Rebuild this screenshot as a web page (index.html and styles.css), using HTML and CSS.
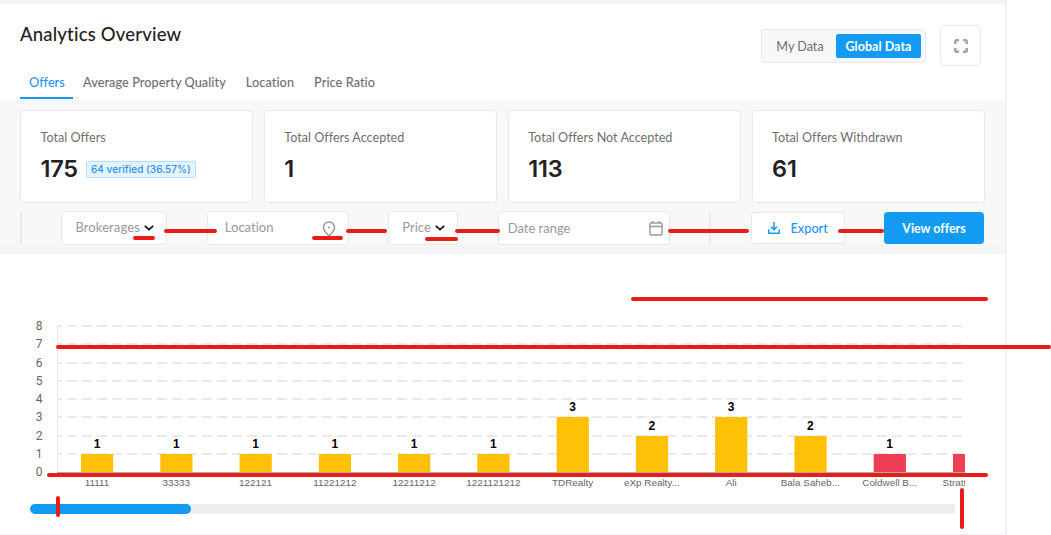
FILE: index.html
```
<!DOCTYPE html>
<html lang="en">

<head>
    <meta charset="UTF-8">
    <meta name="viewport" content="width=device-width, initial-scale=1.0">
    <title>Analytics Overview</title>
    <link rel="stylesheet" href="styles.css">
</head>

<body>
    <div class="panel">
        <div class="header">
            <h1>Analytics Overview</h1>
            <div class="header-actions">
                <div class="toggle">
                    <button class="toggle-btn">My Data</button>
                    <button class="toggle-btn active">Global Data</button>
                </div>
                <button class="fullscreen-btn">
                    <svg width="14" height="14" viewBox="0 0 14 14" fill="none" stroke="#a6a6a6" stroke-width="2.6">
                        <path d="M1.3 5V2.300a1 1 0 0 1 1-1H5M9 1.3h2.700a1 1 0 0 1 1 1V5M12.7 9v2.700a1 1 0 0 1-1 1H9M5 12.7H2.300a1 1 0 0 1-1-1V9" />
                    </svg>
                </button>
            </div>
        </div>

        <div class="tabs">
            <a class="tab active">Offers</a>
            <a class="tab">Average Property Quality</a>
            <a class="tab">Location</a>
            <a class="tab">Price Ratio</a>
        </div>

        <div class="summary">
            <div class="cards">
                <div class="card">
                    <p class="card-title">Total Offers</p>
                    <div class="card-value">175 <span class="badge">64 verified (36.57%)</span></div>
                </div>
                <div class="card">
                    <p class="card-title">Total Offers Accepted</p>
                    <div class="card-value">1</div>
                </div>
                <div class="card">
                    <p class="card-title">Total Offers Not Accepted</p>
                    <div class="card-value">113</div>
                </div>
                <div class="card">
                    <p class="card-title">Total Offers Withdrawn</p>
                    <div class="card-value">61</div>
                </div>
            </div>

            <div class="filters">
                <span class="divider"></span>
                <div class="filter brokerages">
                    <span>Brokerages</span>
                    <svg width="10" height="6" viewBox="0 0 10 6" fill="none" stroke="#111" stroke-width="1.7">
                        <path d="M.8.8 5 4.7 9.2.8" />
                    </svg>
                </div>
                <div class="filter location">
                    <span>Location</span>
                    <svg width="14" height="16" viewBox="0 0 14 16" fill="none" stroke="#999" stroke-width="1.5">
                        <path d="M7 14.8C4.500 12.300 1.500 9.800 1.500 6.400a5.500 5.500 0 0 1 11 0c0 3.400-3 5.900-5.500 8.400z" />
                        <circle cx="7" cy="6.500" r="1" fill="#999" stroke="none" />
                    </svg>
                </div>
                <div class="filter price">
                    <span>Price</span>
                    <svg width="10" height="6" viewBox="0 0 10 6" fill="none" stroke="#111" stroke-width="1.7">
                        <path d="M.8.8 5 4.7 9.2.8" />
                    </svg>
                </div>
                <div class="filter date">
                    <span>Date range</span>
                    <svg width="14" height="15" viewBox="0 0 14 15" fill="none" stroke="#999" stroke-width="1.4">
                        <rect x="1" y="2" width="12" height="12" rx="1" />
                        <path d="M1 5.500h12M3.500 0v2M10.500 0v2" />
                    </svg>
                </div>
                <span class="divider"></span>
                <button class="export-btn">
                    <svg width="12" height="12" viewBox="0 0 12 12" fill="none" stroke="#139bf3" stroke-width="1.5">
                        <path d="M6 0v7.500M3 4.800l3 3 3-3M.8 7.500v3.700h10.400V7.500" />
                    </svg>
                    <span>Export</span>
                </button>
                <button class="view-btn">View offers</button>
            </div>
        </div>

        <div class="chart-area">
            <svg id="chart" width="1005" height="242" viewBox="0 254 1005 242">
                <defs>
                    <clipPath id="plot">
                        <rect x="56" y="254" width="909" height="242" />
                    </clipPath>
                </defs>
                <g id="grid"></g>
                <path class="y-axis" d="M57.500 325v148" />
                <path class="x-axis" d="M57 472.500h908" />
                <g id="bars" clip-path="url(#plot)"></g>
            </svg>
            <div class="scrollbar">
                <div class="scrollbar-thumb"></div>
            </div>
        </div>
    </div>

    <!-- Markup strokes drawn over the panel -->
    <svg class="marks" width="1051" height="535" viewBox="0 0 1051 535">
        <path d="M135 238h18M166 231h49M314 238h27M348 231h37M427 239h29M457 231h41M670 231h77M840 231h42" />
        <path d="M633 299h353M58 347h991M49 475h937M58 498v17M962 490v37" />
    </svg>

    <script>
        const brokers = [
            { name: '11111', offers: 1 },
            { name: '33333', offers: 1 },
            { name: '122121', offers: 1 },
            { name: '11221212', offers: 1 },
            { name: '12211212', offers: 1 },
            { name: '1221121212', offers: 1 },
            { name: 'TDRealty', offers: 3 },
            { name: 'eXp Realty...', offers: 2 },
            { name: 'Ali', offers: 3 },
            { name: 'Bala Saheb...', offers: 2 },
            { name: 'Coldwell B...', offers: 1, color: '#ed3e55' },
            { name: 'Stratton R...', offers: 1, color: '#ed3e55' }
        ];

        // Y position of every tick, from 0 to 8
        const ticks = [472, 454, 436, 417, 399, 381, 363, 344, 326];
        const step = 79.27;
        let grid = '';
        let bars = '';

        ticks.forEach((y, value) => {
            grid += `<text class="tick" x="39" y="${y + 4}">${value}</text>`;
            if (value > 0) {
                grid += `<path class="grid-line" d="M57 ${y}h905" />`;
            }
        });

        brokers.forEach((broker, i) => {
            const x = 81 + i * step;
            const y = ticks[broker.offers];
            bars += `<rect x="${x}" y="${y}" width="32.2" height="${472 - y}" fill="${broker.color || '#ffc107'}" />`;
            bars += `<text class="bar-value" x="${x + 16}" y="${y - 6}">${broker.offers}</text>`;
            bars += `<text class="bar-name" x="${x + 16}" y="486">${broker.name}</text>`;
        });

        document.getElementById('grid').innerHTML = grid;
        document.getElementById('bars').innerHTML = bars;
    </script>
</body>

</html>
```
FILE: styles.css
```
* {
    margin: 0;
    padding: 0;
    box-sizing: border-box;
}

body {
    width: 1051px;
    height: 535px;
    overflow: hidden;
    background-color: #fff;
    font-family: Lato, sans-serif;
    font-size: 13px;
    font-variant-ligatures: none;
    color: #6f6f6f;
}

button {
    font: inherit;
    font-variant-ligatures: none;
    color: inherit;
    border: none;
    background: none;
}

.panel {
    width: 1007px;
    height: 535px;
    border-top: 4px solid #f2f3f8;
    border-right: 2px solid #f0f0f8;
    border-bottom: 1px solid #f2f3f8;
}

.header {
    display: flex;
    justify-content: space-between;
    height: 66px;
    padding: 0 24px 0 20px;
}

h1 {
    margin-top: 18px;
    font-size: 18.5px;
    font-weight: 500;
    line-height: 25px;
    letter-spacing: 0.18px;
    color: #212121;
}

.header-actions {
    display: flex;
    gap: 14px;
    padding-top: 21px;
}

.toggle {
    display: flex;
    width: 165px;
    height: 34px;
    margin-top: 4px;
    padding: 4px;
    background-color: #f8f8f8;
    border: 1px solid #e9e9e9;
    border-radius: 4px;
    font-size: 12.6px;
}

.toggle-btn {
    width: 70px;
    height: 24px;
    padding-right: 2px;
    line-height: 23px;
}

.toggle-btn.active {
    width: 85px;
    padding-right: 0;
    background-color: #139bf3;
    border-radius: 2px;
    color: #fff;
    font-weight: 700;
}

.fullscreen-btn {
    display: flex;
    align-items: center;
    justify-content: center;
    width: 41px;
    height: 41px;
    border: 1px solid #e9e9e9;
    border-radius: 5px;
}

.tabs {
    display: flex;
    height: 30px;
    padding-left: 20px;
}

.tab {
    height: 29px;
    padding: 2px 10px 0;
    font-size: 12.7px;
    line-height: 20px;
    font-weight: 500;
    letter-spacing: 0.07px;
    white-space: nowrap;
}

.tab.active {
    width: 53px;
    padding: 2px 9px 0;
    letter-spacing: 0;
    color: #2a93ee;
    border-bottom: 2px solid #139bf3;
}

.summary {
    height: 154px;
    padding: 10px 21px 0 20px;
    background: linear-gradient(#f8f8f8 140px, #f4f4f4);
}

.cards {
    display: grid;
    grid-template-columns: repeat(4, 233.4px);
    justify-content: space-between;
    margin-right: -1px;
}

.card {
    height: 93px;
    padding: 17px 19.5px;
    background-color: #fff;
    border: 1px solid #e9e9e9;
    border-radius: 4px;
}

.card-title {
    font-size: 12.6px;
    line-height: 20px;
}

.card-value {
    display: flex;
    align-items: center;
    gap: 8px;
    margin-top: 6px;
    font-family: Inter, sans-serif;
    font-size: 23.5px;
    font-weight: 600;
    line-height: 30px;
    letter-spacing: -0.2px;
    color: #212121;
}

.badge {
    height: 17px;
    padding: 0 4px;
    background-color: #e6f4ff;
    border: 1px solid #b4defa;
    border-radius: 2px;
    font-size: 10px;
    font-weight: 500;
    line-height: 15px;
    letter-spacing: 0.05px;
    color: #2a93ee;
}

.filters {
    display: flex;
    align-items: center;
    justify-content: space-between;
    margin-top: 8px;
    height: 34px;
}

.divider {
    width: 2px;
    height: 32px;
    background-color: #e9e9e9;
}

.filter {
    display: flex;
    align-items: center;
    height: 34px;
    background-color: #fff;
    border: 1px solid #e9e9e9;
    border-radius: 4px;
    color: #999;
}

.filter span {
    padding-bottom: 2px;
}

.brokerages {
    width: 106px;
    padding-left: 13px;
    gap: 4px;
    letter-spacing: 0.1px;
}

.price {
    width: 70px;
    padding-left: 13px;
    gap: 4px;
}

.location {
    justify-content: space-between;
    width: 142px;
    padding: 0 12px 0 17px;
}

.location svg {
    margin-top: 2px;
}

.date {
    justify-content: space-between;
    width: 172px;
    padding: 0 6px 0 9px;
}

.date span {
    padding-bottom: 0;
}

.export-btn {
    display: flex;
    align-items: center;
    gap: 11px;
    width: 94px;
    height: 32px;
    padding-left: 16px;
    background-color: #fff;
    border: 1px solid #e9e9e9;
    border-radius: 3px;
    color: #2a93ee;
    font-size: 12.7px;
    font-weight: 500;
}

.view-btn {
    width: 100px;
    height: 32px;
    background-color: #139bf3;
    border-radius: 4px;
    color: #fff;
    font-size: 12.4px;
    font-weight: 700;
}

.chart-area {
    height: 280px;
}

#chart {
    display: block;
}

.grid-line {
    stroke: #e9e9e9;
    stroke-width: 2;
    stroke-dasharray: 10 5;
    stroke-dashoffset: 5;
}

.y-axis {
    stroke: #e9e9e9;
}

.x-axis {
    stroke: #aaa;
}

.tick,
.bar-value {
    text-anchor: middle;
    font-family: Roboto, sans-serif;
    font-size: 12px;
    fill: #666;
}

.bar-value {
    font-family: "Liberation Sans", Arial, sans-serif;
    font-weight: 700;
    fill: #000;
}

.bar-name {
    text-anchor: middle;
    font-family: "Liberation Sans", Arial, sans-serif;
    font-size: 9.9px;
    fill: #666;
}

.scrollbar {
    width: 925px;
    height: 10px;
    margin: 8px 0 0 30px;
    background-color: #eee;
    border-radius: 5px 0 0 5px;
}

.scrollbar-thumb {
    width: 161px;
    height: 10px;
    background-color: #139bf3;
    border-radius: 5px;
}

.marks {
    position: absolute;
    top: 0;
    left: 0;
    fill: none;
    stroke: #e91c1c;
    stroke-width: 4;
    stroke-linecap: round;
    pointer-events: none;
}
```
